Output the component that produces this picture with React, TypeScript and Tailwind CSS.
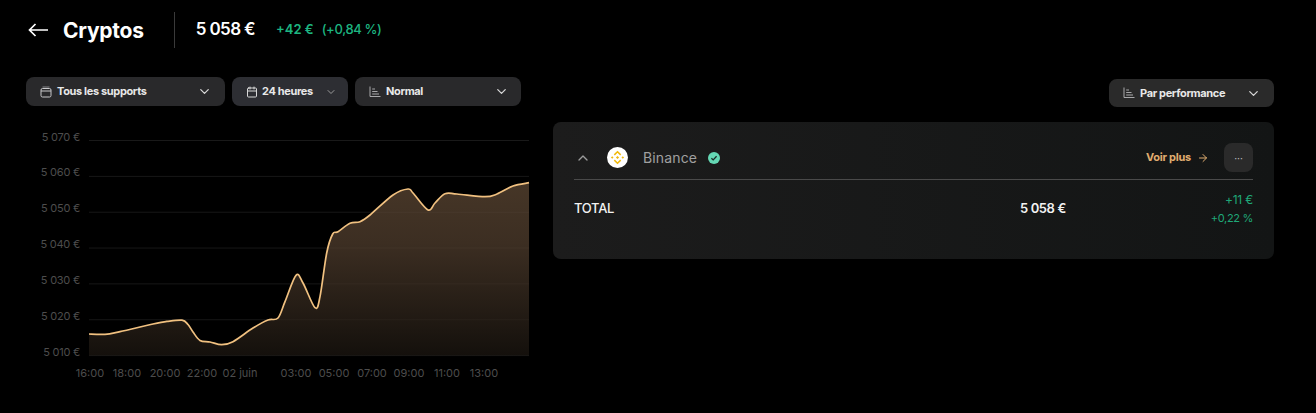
import { ArrowRight, Calendar, ChevronDown, ChevronUp } from 'lucide-react';

const points: [number, number][] = [
  [0, 194], [16, 194.3], [31, 191.6], [64, 184], [78, 181.4], [93, 180.2], [99, 184.5], [104, 192], [111, 200.4],
  [121, 202], [132.7, 204.7], [144, 201.7], [164, 188], [179, 180], [189, 178], [196, 161.7],
  [207, 135.3], [214, 143], [226, 167.7], [231, 156.7], [237.7, 113], [243.7, 94], [249, 91.7],
  [261, 83.3], [271, 81.7], [281, 75], [304, 55], [319, 49], [324, 53], [339, 70], [346, 63],
  [356, 53.7], [368, 54], [396, 56.7], [408, 54], [424, 46], [440, 42.7],
];

function smoothPath(pts: [number, number][]) {
  let d = `M${pts[0][0]} ${pts[0][1]}`;
  for (let i = 0; i < pts.length - 1; i++) {
    const p0 = pts[i - 1] || pts[i];
    const p1 = pts[i];
    const p2 = pts[i + 1];
    const p3 = pts[i + 2] || p2;
    const c1x = p1[0] + (p2[0] - p0[0]) / 6;
    const c1y = p1[1] + (p2[1] - p0[1]) / 6;
    const c2x = p2[0] - (p3[0] - p1[0]) / 6;
    const c2y = p2[1] - (p3[1] - p1[1]) / 6;
    d += ` C${c1x.toFixed(1)} ${c1y.toFixed(1)} ${c2x.toFixed(1)} ${c2y.toFixed(1)} ${p2[0]} ${p2[1]}`;
  }
  return d;
}

const yLabels = ['5 070 €', '5 060 €', '5 050 €', '5 040 €', '5 030 €', '5 020 €', '5 010 €'];
const xLabels = [
  { label: '16:00', x: 1 }, { label: '18:00', x: 38 }, { label: '20:00', x: 76 }, { label: '22:00', x: 113 },
  { label: '02 juin', x: 151 }, { label: '03:00', x: 207 }, { label: '05:00', x: 245 }, { label: '07:00', x: 283 },
  { label: '09:00', x: 320 }, { label: '11:00', x: 358 }, { label: '13:00', x: 395 },
];

function BackArrow() {
  return (
    <svg width="20" height="14" viewBox="0 0 20 14" fill="none" stroke="#ffffff" strokeWidth="1.7" className="shrink-0">
      <path d="M20 7H1.5M7.5 1L1.5 7l6 6" />
    </svg>
  );
}

function WalletIcon() {
  return (
    <svg width="12" height="12" viewBox="0 0 12 12" fill="none" stroke="#c9c9cb" strokeWidth="1" className="shrink-0">
      <rect x="1" y="2.5" width="10" height="8.5" rx="1.5" />
      <path d="M1 5h10" />
      <path d="M2.5 1h7" opacity="0.6" />
    </svg>
  );
}

function BarsIcon() {
  return (
    <svg width="12" height="12" viewBox="0 0 12 12" fill="none" stroke="#a8a8aa" strokeWidth="1" className="shrink-0">
      <path d="M1 0.5V10.5H11.5" />
      <path d="M3.2 3H6M3.2 5.5H8.5M3.2 8H10" />
    </svg>
  );
}

function BinanceLogo() {
  return (
    <svg width="21" height="21" viewBox="0 0 21 21" className="shrink-0">
      <circle cx="10.5" cy="10.5" r="10.5" fill="#ffffff" />
      <g fill="none" stroke="#f0b90b" strokeWidth="1.5">
        <path d="M7.3 7.9l3.2-3.2 3.2 3.2" />
        <path d="M7.3 13.1l3.2 3.2 3.2-3.2" />
      </g>
      <g fill="#f0b90b">
        <path d="M3.9 10.5l1.3-1.3 1.3 1.3-1.3 1.3z" />
        <path d="M14.5 10.5l1.3-1.3 1.3 1.3-1.3 1.3z" />
        <path d="M10.5 8.9l1.6 1.6-1.6 1.6-1.6-1.6z" />
      </g>
    </svg>
  );
}

function VerifiedBadge() {
  return (
    <svg width="12" height="12" viewBox="0 0 12 12" className="shrink-0">
      <circle cx="6" cy="6" r="6" fill="#64d8b4" />
      <path d="M3.4 6.2l1.8 1.7 3.4-3.6" fill="none" stroke="#1b2a26" strokeWidth="1.3" />
    </svg>
  );
}

function Chart() {
  const line = smoothPath(points);
  return (
    <svg width="494" height="250" viewBox="-63 -12 494 250" className="block overflow-visible">
      <defs>
        <linearGradient id="area" x1="0" y1="0" x2="0" y2="1">
          <stop offset="0" stopColor="#463627" />
          <stop offset="0.35" stopColor="#3c2e22" />
          <stop offset="1" stopColor="#14100c" />
        </linearGradient>
      </defs>
      {yLabels.map((label, i) => (
        <g key={label}>
          <line x1="0" x2="440" y1={i * 35.85 + 0.5} y2={i * 35.85 + 0.5} stroke="#111111" />
          <text x="-9" y={i * 35.85 - 2.5} textAnchor="end" fill="#4d4d4d" fontSize="11" letterSpacing="-0.25" fontFamily="Inter, sans-serif" dominantBaseline="middle">
            {label}
          </text>
        </g>
      ))}
      <path d={`${line} L440 215.6 L0 215.6 Z`} fill="url(#area)" />
      {yLabels.map((label, i) => (
        <line key={label} x1="0" x2="440" y1={i * 35.85 + 0.5} y2={i * 35.85 + 0.5} stroke="#ffffff" strokeOpacity="0.035" />
      ))}
      <path d={line} fill="none" stroke="#f1c180" strokeWidth="1.7" />
      {xLabels.map((t) => (
        <text key={t.label} x={t.x} y="237" textAnchor="middle" fill="#4d4d4d" fontSize="11" fontFamily="Inter, sans-serif">
          {t.label}
        </text>
      ))}
    </svg>
  );
}

export default function App() {
  return (
    <div className="w-[1316px] h-[413px] bg-black text-white overflow-hidden font-['Inter',sans-serif]">
      {/* Header */}
      <div className="flex items-center h-[36px] mt-[12px] pl-[28px]">
        <BackArrow />
        <h1 className="ml-[15px] text-[21px] leading-none font-bold tracking-[-0.25px]">Cryptos</h1>
        <div className="ml-[30px] w-px h-[36px] bg-[#3a3a3a]" />
        <span className="ml-[21px] text-[17px] font-semibold tracking-[-0.6px]">5 058 €</span>
        <span className="ml-[21px] text-[13px] font-semibold text-[#1db580]">+42 €</span>
        <span className="ml-[8px] text-[13px] font-medium tracking-[-0.35px] text-[#1db580]">(+0,84 %)</span>
      </div>

      <div className="flex mt-[29px] pl-[26px]">
        {/* Left column */}
        <div className="w-[495px]">
          <div className="flex gap-[7px] text-[11px] font-bold tracking-[-0.35px]">
            <button className="flex items-center w-[199px] h-[29px] pl-[14px] pr-[13px] rounded-lg bg-[#29292b] text-[#e8e8e8]">
              <WalletIcon />
              <span className="ml-[5px]">Tous les supports</span>
              <ChevronDown size={15} className="ml-auto text-[#d8d8d8]" />
            </button>
            <button className="flex items-center w-[116px] h-[29px] pl-[14px] pr-[11px] rounded-lg bg-[#2d2e33] text-[#e8e8e8]">
              <Calendar size={12} className="text-[#d8d8d8]" />
              <span className="ml-[4px]">24 heures</span>
              <ChevronDown size={12} className="ml-auto text-[#9a9a9a]" />
            </button>
            <button className="flex items-center w-[166px] h-[29px] pl-[14px] pr-[12px] rounded-lg bg-[#29292b] text-[#e8e8e8]">
              <BarsIcon />
              <span className="ml-[5px]">Normal</span>
              <ChevronDown size={15} className="ml-auto text-[#d8d8d8]" />
            </button>
          </div>
          <div className="mt-[22px]">
            <Chart />
          </div>
        </div>

        {/* Right column */}
        <div className="ml-[32px] w-[721px] flex flex-col">
          <div className="flex justify-end mt-[2px]">
            <button className="flex items-center w-[165px] h-[28px] pl-[14px] pr-[13px] rounded-lg bg-[#2a2a2a] text-[11px] font-bold tracking-[-0.35px] text-[#e8e8e8]">
              <BarsIcon />
              <span className="ml-[5px]">Par performance</span>
              <ChevronDown size={15} className="ml-auto text-[#d8d8d8]" />
            </button>
          </div>
          <div className="mt-[15px] h-[137px] rounded-lg bg-gradient-to-r from-[#1c1c1c] to-[#131515] px-[21px]">
            <div className="flex items-center h-[58px] pt-[14px] border-b border-[#4a4a4a]">
              <ChevronUp size={16} className="ml-[1px] text-[#9b9b9b]" />
              <div className="ml-[16px]"><BinanceLogo /></div>
              <span className="ml-[15px] text-[14px] text-[#a0a0a0] tracking-[0.15px]">Binance</span>
              <div className="ml-[11px]"><VerifiedBadge /></div>
              <span className="ml-auto text-[11px] font-bold tracking-[-0.25px] text-[#e0ad70]">Voir plus</span>
              <ArrowRight size={12} className="ml-[6px] text-[#e0ad70]" />
              <button className="ml-[15px] w-[29px] h-[29px] rounded-lg bg-[#2a2a2a] flex items-center justify-center text-[10px] leading-none text-[#bcbcbc]">
                ···
              </button>
            </div>
            <div className="flex items-center h-[58px] text-[13px]">
              <span className="font-medium tracking-[-0.3px] text-[#f2f2f2] w-[446px]">TOTAL</span>
              <span className="font-semibold tracking-[-0.4px] text-[#f2f2f2]">5 058 €</span>
              <div className="ml-auto flex flex-col items-end gap-[2px] text-[#1fa878]">
                <span className="text-[12px] leading-[16px] tracking-[-0.2px]">+11 €</span>
                <span className="text-[11px] leading-[16px] tracking-[-0.3px]">+0,22 %</span>
              </div>
            </div>
          </div>
        </div>
      </div>
    </div>
  );
}
